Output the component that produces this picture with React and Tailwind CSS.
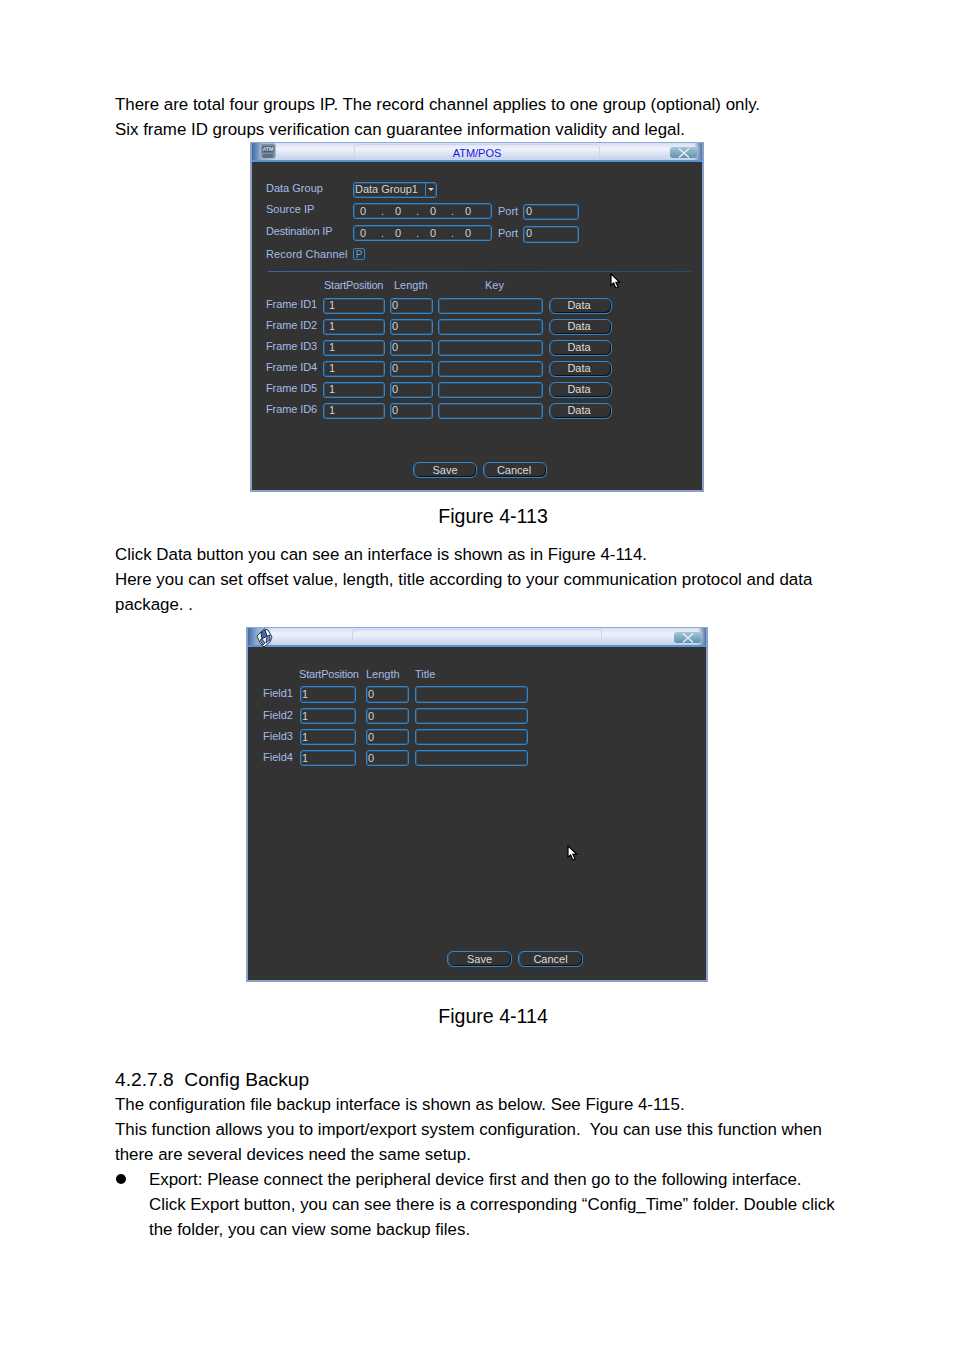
const label = "text-[#a4bce8]";

function Cursor({ className }) {
  return (
    <svg viewBox="0 0 11 16" className={`absolute h-4 w-[11px] ${className}`}>
      <path d="M1 0.8V12.2L3.6 10L5.8 15L8 14L5.9 9.4H9.6Z" fill="#fff" stroke="#000" strokeWidth="1.2" />
    </svg>
  );
}

function Field({ w, children, className = "h-4" }) {
  return (
    <div
      className={`flex shrink-0 items-center rounded-[3px] border border-[#2f86cc] pb-px text-[11px] text-[#d2d2d2] shadow-[inset_0_0_0_1px_rgba(43,120,184,0.4)] ${className}`}
      style={{ width: w }}
    >
      {children}
    </div>
  );
}

function Btn({ w, children, className = "" }) {
  return (
    <div
      className={`flex h-4 shrink-0 items-center justify-center rounded-[6px] border border-[#2f86cc] text-[11px] text-[#dcdcdc] shadow-[inset_1px_0_0_rgba(43,120,184,0.5),inset_-1px_-1px_0_#111] ${className}`}
      style={{ width: w }}
    >
      {children}
    </div>
  );
}

function TitleBar({ title, icon, panelClass }) {
  return (
    <div className="relative flex h-5 shrink-0 items-center justify-center border-y border-b-2 border-t-[#8fa9d8] border-b-[#5a93d2] bg-[linear-gradient(180deg,#d6def2_0%,#f0f3fb_35%,#c4d0ea_100%)] text-[11px] text-[#1414e6]">
      <div className="absolute inset-y-0 left-0 w-6 bg-[linear-gradient(90deg,#3f6da6,#8fa8d2_35%,rgba(223,229,245,0)_100%)]" />
      <div className="absolute inset-y-0 right-0 w-2 bg-[linear-gradient(90deg,rgba(223,229,245,0),#4d74a8)]" />
      <div className={`absolute top-[1px] h-4 rounded-[3px] border border-[#ccd6ec] ${panelClass}`} />
      <div className="absolute left-2 top-0">{icon}</div>
      <span className="relative pt-[3px]">{title}</span>
      <div className="absolute right-[5px] top-1 flex h-[11px] w-[27px] items-center justify-center rounded-[3px] bg-[linear-gradient(180deg,#a8c6d8,#5d93ad)]">
        <svg viewBox="0 0 14 10" className="h-[10px] w-[14px]">
          <path d="M2 0.5L12 9.5M12 0.5L2 9.5" stroke="#eef4f8" strokeWidth="1.2" fill="none" />
        </svg>
      </div>
    </div>
  );
}

function AtmIcon() {
  return (
    <svg viewBox="0 0 16 16" className="h-4 w-4">
      <rect x="0.5" y="0.5" width="15" height="15" rx="2.5" fill="#7c8fa6" stroke="#a8b8ca" />
      <rect x="2.5" y="3" width="11" height="6.5" fill="#4f5f70" />
      <text x="8" y="8.2" textAnchor="middle" fontSize="5" fontFamily="Liberation Sans" fontWeight="700" fill="#d8e0e8">ATM</text>
      <path d="M3 12H13M3 14H13" stroke="#3f4f66" />
    </svg>
  );
}

function CubeIcon() {
  return (
    <svg viewBox="0 0 18 20" className="-ml-[1px] h-5 w-[18px]">
      <path d="M2 8L9 1L13 2L17 9L15 14L9 19L5 15Z" fill="#f2f5fb" stroke="#26344e" />
      <path d="M6 5L10 2L12 8L7 11Z" fill="#3d6ea8" stroke="#1d2a42" />
      <path d="M12 8L15 7V12L11 15ZM7 11L10 15L8 17L5 12Z" fill="#6d88b4" stroke="#1d2a42" strokeWidth="0.8" />
      <circle cx="2" cy="10" r="1" fill="#35c24a" />
    </svg>
  );
}

function IpField() {
  return (
    <Field w={139} className="h-4 pl-[6px] pt-px">
      {[0, 1, 2, 3].map((n) => (
        <span key={n} className="flex w-[35px] shrink-0">
          <span className="w-[21px]">0</span>
          {n < 3 && <span>.</span>}
        </span>
      ))}
    </Field>
  );
}

function AtmWindow() {
  return (
    <div className="relative ml-[135px] flex h-[350px] w-[454px] flex-col border-2 border-t-0 border-[#8ba1cb] bg-[#333333] font-['Liberation_Sans',sans-serif]">
      <TitleBar title="ATM/POS" icon={<AtmIcon />} panelClass="left-[102px] w-[246px]" />
      <div className={`flex flex-col pl-[14px] pt-5 text-[11px] ${label}`}>
        <div className="flex h-4 items-center">
          <span className="w-[87px] pb-[3px]">Data Group</span>
          <Field w={84} className="h-4 pl-[1px]">
            <span className="flex-1">Data Group1</span>
            <span className="flex h-full w-[11px] items-center justify-center border-l border-[#2f86cc]">
              <span className="border-x-[3px] border-t-[3px] border-x-transparent border-t-[#d2d2d2]" />
            </span>
          </Field>
        </div>
        <div className="mt-[5px] flex h-4 items-center">
          <span className="w-[87px] pb-[3px]">Source IP</span>
          <IpField />
          <span className="ml-[6px] w-[25px]">Port</span>
          <Field w={56} className="mt-px h-4 pl-[2px]">0</Field>
        </div>
        <div className="mt-[6px] flex h-4 items-center">
          <span className="w-[87px] pb-[3px] tracking-[-0.15px]">Destination IP</span>
          <IpField />
          <span className="ml-[6px] w-[25px]">Port</span>
          <Field w={56} className="mt-[2px] h-[17px] pl-[2px]">0</Field>
        </div>
        <div className="mt-[7px] flex h-3 items-center">
          <span className="w-[87px] tracking-[0.15px]">Record Channel</span>
          <div className="flex h-3 w-3 items-center justify-center rounded-[2px] border border-[#2f86cc] text-[10px] text-[#6d9bd0]">P</div>
        </div>
        <div className="ml-[2px] mt-[11px] h-px w-[423px] bg-[linear-gradient(90deg,#2b6ea8,#2a4a66)]" />
        <div className="relative mt-[6px] h-[14px] leading-[14px]">
          <span className="absolute left-[58px] tracking-[-0.25px]">StartPosition</span>
          <span className="absolute left-[128px]">Length</span>
          <span className="absolute left-[219px]">Key</span>
        </div>
        <div className="mt-[6px] flex flex-col gap-[5px]">
          {[1, 2, 3, 4, 5, 6].map((n) => (
            <div key={n} className="flex h-4 items-center">
              <span className="w-[57px] pb-[3px] tracking-[-0.1px]">Frame ID{n}</span>
              <Field w={62} className="h-4 pl-[5px]">1</Field>
              <Field w={43} className="ml-[5px] h-4 pl-[1px]">0</Field>
              <Field w={105} className="ml-[5px] h-4" />
              <div className="ml-[6px]"><Btn w={63} className="pb-px pr-[3px]">Data</Btn></div>
            </div>
          ))}
        </div>
        <div className="ml-[147px] mt-[43px] flex gap-[6px]">
          <Btn w={64}>Save</Btn>
          <Btn w={64} className="pr-[2px]">Cancel</Btn>
        </div>
      </div>
      <Cursor className="left-[358px] top-[131px]" />
    </div>
  );
}

function FieldWindow() {
  return (
    <div className="relative ml-[131px] flex h-[355px] w-[462px] flex-col border-2 border-t-0 border-[#8ba1cb] bg-[#333333] font-['Liberation_Sans',sans-serif]">
      <TitleBar title="" icon={<CubeIcon />} panelClass="left-[104px] w-[250px]" />
      <div className={`flex flex-col pl-[15px] pt-5 text-[11px] ${label}`}>
        <div className="relative h-[14px] leading-[14px]">
          <span className="absolute left-[36px] tracking-[-0.2px]">StartPosition</span>
          <span className="absolute left-[103px]">Length</span>
          <span className="absolute left-[152px]">Title</span>
        </div>
        <div className="mt-[5px] flex flex-col gap-[5px]">
          {[1, 2, 3, 4].map((n) => (
            <div key={n} className={n === 1 ? "flex h-[17px] items-center" : "flex h-4 items-center"}>
              <span className={n === 1 ? "w-[37px] pb-[3px]" : "w-[37px] pb-px"}>Field{n}</span>
              <Field w={56} className={n === 1 ? "h-[17px] pl-[1px]" : "h-4 pl-[1px] pt-px"}>1</Field>
              <Field w={43} className={n === 1 ? "ml-[10px] h-[17px] pl-[1px]" : "ml-[10px] h-4 pl-[1px] pt-px"}>0</Field>
              <Field w={113} className={n === 1 ? "ml-[6px] h-[17px]" : "ml-[6px] h-4"} />
            </div>
          ))}
        </div>
        <div className="ml-[184px] mt-[185px] flex gap-[6px]">
          <Btn w={65}>Save</Btn>
          <Btn w={65}>Cancel</Btn>
        </div>
      </div>
      <Cursor className="left-[319px] top-[218px]" />
    </div>
  );
}

export default function App() {
  return (
    <div className="min-h-[1350px] bg-white pl-[115px] pt-[92px] font-['Liberation_Sans',sans-serif] text-[16.9px] leading-[25px] text-black">
      <p>There are total four groups IP. The record channel applies to one group (optional) only.</p>
      <p>Six frame ID groups verification can guarantee information validity and legal.</p>
      <AtmWindow />
      <p className="mt-3 w-[756px] text-center text-[19.6px]">Figure 4-113</p>
      <p className="mt-[13px]">Click Data button you can see an interface is shown as in Figure 4-114.</p>
      <p>Here you can set offset value, length, title according to your communication protocol and data</p>
      <p>package. .</p>
      <div className="mt-[10px]"><FieldWindow /></div>
      <p className="mt-[22px] w-[756px] text-center text-[19.6px]">Figure 4-114</p>
      <h2 className="mt-[38px] whitespace-pre text-[19.2px]">4.2.7.8  Config Backup</h2>
      <p>The configuration file backup interface is shown as below. See Figure 4-115.</p>
      <p className="whitespace-pre">This function allows you to import/export system configuration.  You can use this function when</p>
      <p>there are several devices need the same setup.</p>
      <div className="flex">
        <div className="flex w-[34px] items-start pl-[1px] pt-[7px]">
          <span className="h-[10px] w-[10px] rounded-full bg-black" />
        </div>
        <div>
          <p>Export: Please connect the peripheral device first and then go to the following interface.</p>
          <p>Click Export button, you can see there is a corresponding “Config_Time” folder. Double click</p>
          <p>the folder, you can view some backup files.</p>
        </div>
      </div>
    </div>
  );
}
